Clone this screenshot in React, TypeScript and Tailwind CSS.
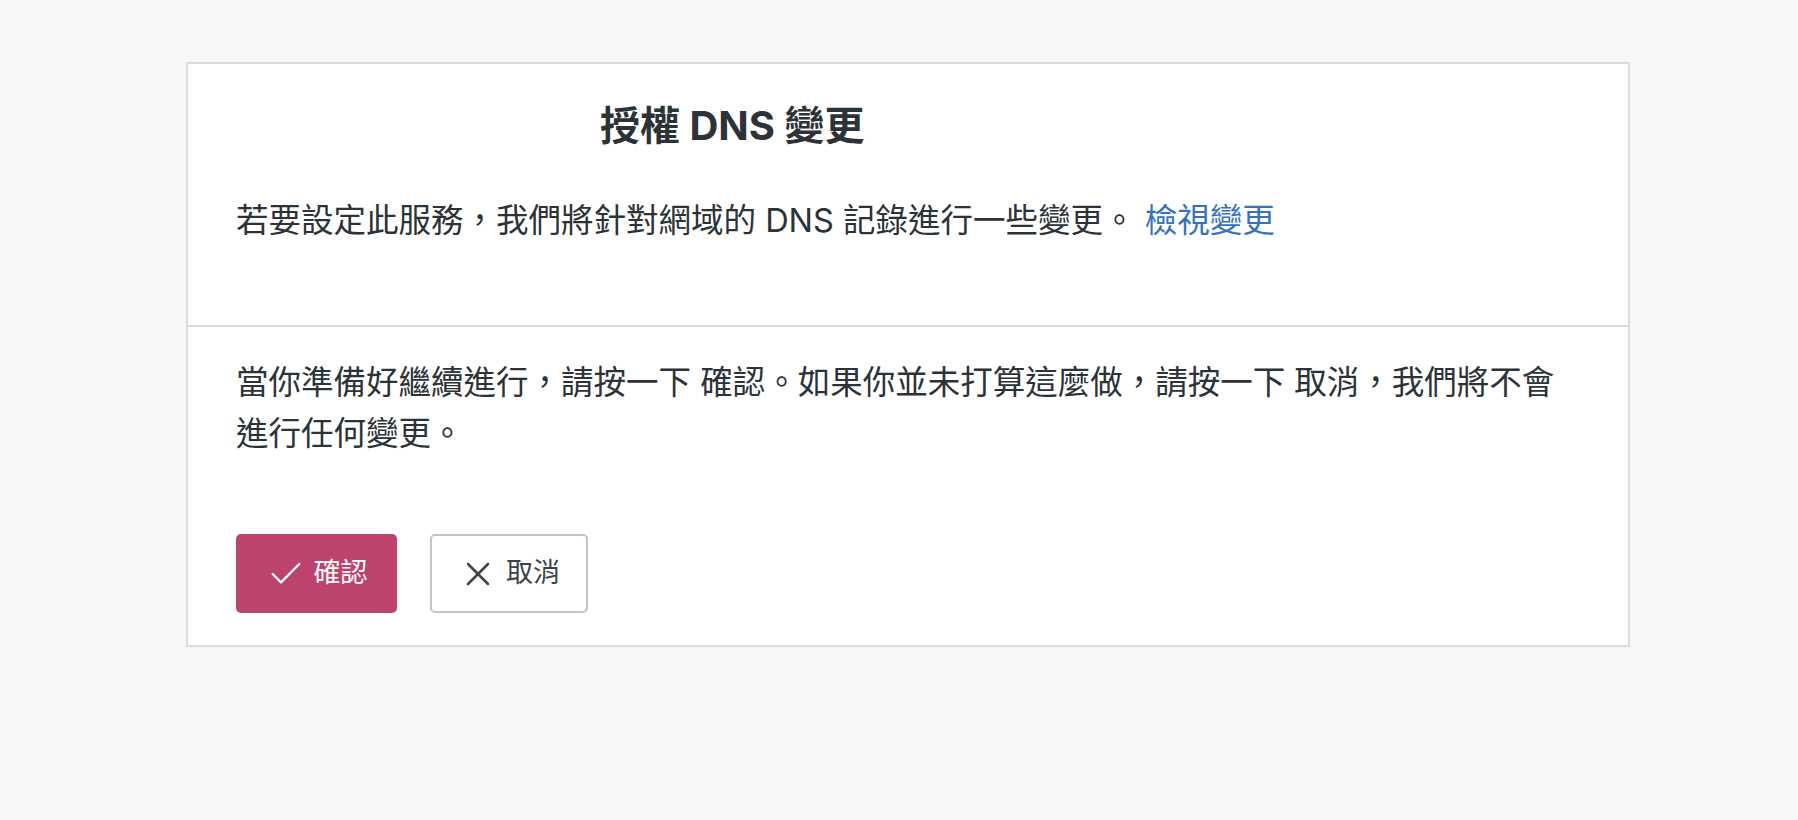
import { Check, X } from "lucide-react";

export default function App() {
  return (
    <div
      className="min-h-screen bg-[#f6f7f7] pt-[62px] text-[#2c3338]"
      style={{ fontFamily: 'Inter, "Noto Sans CJK TC", sans-serif' }}
    >
      <div className="ml-[186px] w-[1444px] border-2 border-[#dcdcdc] bg-white">
        <div className="border-b-2 border-[#dcdcdc] px-[48px] pt-[38px] pb-[78px]">
          <h1 className="pl-[364px] text-[40px] leading-[48px] font-bold">
            授權 DNS 變更
          </h1>
          <p className="mt-[45px] text-[32.5px] leading-[52px]">
            若要設定此服務，我們將針對網域的 DNS 記錄進行一些變更。{" "}
            <a href="#" className="text-[#3573c0]">
              檢視變更
            </a>
          </p>
        </div>

        <div className="px-[48px] pt-[30px] pb-[32px]">
          <p className="text-[32.5px] leading-[51px]">
            當你準備好繼續進行，請按一下 確認。如果你並未打算這麼做，請按一下 取消，我們將不會進行任何變更。
          </p>
          <div className="mt-[75px] flex gap-[33px]">
            <button
              type="button"
              className="flex h-[79px] w-[161px] items-center justify-center gap-[8px] rounded-[5px] bg-[#bb436d] text-[27px] text-white"
            >
              <Check size={40} strokeWidth={1.4} />
              確認
            </button>
            <button
              type="button"
              className="flex h-[79px] w-[158px] items-center justify-center gap-[8px] rounded-[5px] border-2 border-[#c3c4c7] bg-white text-[27px] text-[#3c434a]"
            >
              <X size={40} strokeWidth={1.5} />
              取消
            </button>
          </div>
        </div>
      </div>
    </div>
  );
}
